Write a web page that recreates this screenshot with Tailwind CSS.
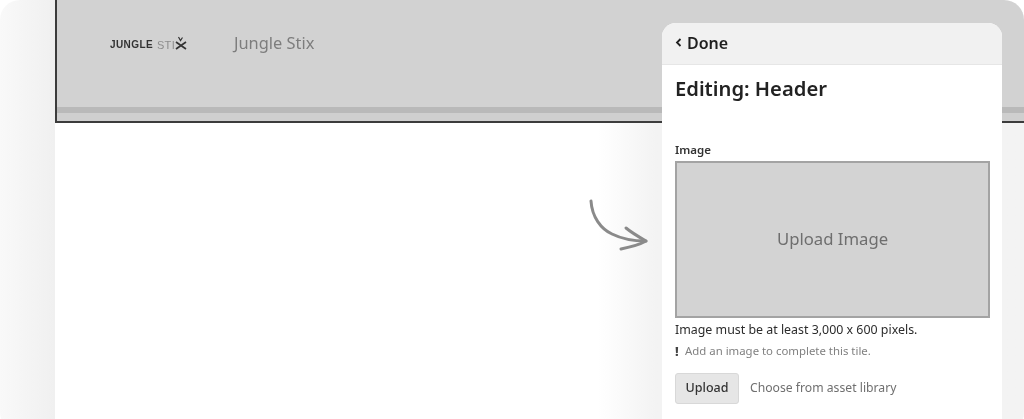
<!DOCTYPE html>
<html><head><meta charset="utf-8"><script src="https://cdn.jsdelivr.net/npm/@tailwindcss/browser@4"></script></head>
<body class="bg-white">
<div class="relative w-[1024px] h-[419px] overflow-hidden bg-white font-['Noto_Sans','Open_Sans',sans-serif] blur-[0.4px]">
  <div class="w-full h-[432px] rounded-[20px] bg-gradient-to-r from-[#f9f9f9] to-[#f0f0f0] to-[5.3%] overflow-hidden pl-[55px] flex">
    <div class="flex-1 flex flex-col bg-white">
      <div class="h-[123px] border-l-2 border-b-2 border-[#3c3c3c] bg-[#d2d2d2] flex flex-col">
        <div class="h-[107px] flex items-center gap-[46px] pl-[53px] pb-[21px]">
          <div class="relative flex items-center w-[78px] leading-none pt-[4px]">
            <span class="font-['Liberation_Sans'] font-bold text-[#333] text-[10px] tracking-[0.4px]">JUNGLE</span>
            <span class="ml-[4px] font-['Liberation_Sans'] text-[#8d8d8d] text-[11px] tracking-[0.3px]">ST</span>
            <span class="text-[#8d8d8d] text-[11px] font-['Liberation_Sans']">I</span>
            <svg class="ml-[-1px] mt-[-4px]" width="14" height="14" viewBox="0 0 14 14" fill="none" stroke="#333" stroke-width="1.7"><path d="M2 6 L12 13 M2 13 L12 6"/><path d="M4.5 1 L6.5 4.5 L8.5 1.5" stroke-width="1.2"/></svg>
          </div>
          <span class="text-[16.4px] leading-none text-[#7d7d7d]">Jungle Stix</span>
        </div>
        <div class="h-[6px] bg-[#b9b9b9]"></div>
        <div class="flex-1 bg-[#cfcfcf]"></div>
      </div>
      <div class="flex-1 bg-gradient-to-r from-white from-[56%] to-[#f3f3f3] to-[62%]"></div>
    </div>
  </div>

  <svg class="absolute left-[585px] top-[195px]" width="65" height="60" viewBox="0 0 65 60" fill="none" stroke="#8a8a8a" stroke-width="3" stroke-linecap="round" stroke-linejoin="round">
    <path d="M6 6 C7 22 16 34 27 39 C37 44 49 46 61 46"/>
    <path d="M41 33 C47 38 54 42 61 46 C54 50 46 52 36 54"/>
  </svg>

  <div class="absolute left-[662px] top-[23px] w-[340px] h-[396px] rounded-t-[14px] bg-white overflow-hidden text-[#1f1f1f]">
    <div class="h-[42px] bg-[#f1f1f1] border-b border-[#e6e6e6] flex items-center pl-[13px] pb-[2px] gap-[5px]">
      <svg width="7" height="9" viewBox="0 0 7 9" fill="none" stroke="#222" stroke-width="1.8"><path d="M5.5 1 L2 4.5 L5.5 8"/></svg>
      <span class="text-[16px] font-semibold leading-none">Done</span>
    </div>
    <div class="px-[13px]">
      <h1 class="mt-[12px] text-[20.2px] leading-[22px] font-semibold text-[#222]">Editing: Header</h1>
      <div class="mt-[44px] text-[11.5px] leading-[14px] font-semibold text-[#333]">Image</div>
      <div class="mt-[4px] w-[315px] h-[157px] bg-[#d3d3d3] border-2 border-[#a3a3a3] flex items-center justify-center pb-[2px] text-[16.7px] text-[#6e6e6e]">Upload Image</div>
      <div class="mt-[3px] text-[12.4px] leading-[17px] text-[#2c2c2c]">Image must be at least 3,000 x 600 pixels.</div>
      <div class="mt-[6px] flex items-center gap-[3px] text-[11.4px] leading-[14px] text-[#808080]"><span class="font-extrabold text-[#444] text-[13px] leading-none w-[7px]">!</span><span>Add an image to complete this tile.</span></div>
      <div class="mt-[15px] flex items-center gap-[11px]">
        <button class="w-[64px] h-[31px] rounded-[3px] bg-[#e6e6e6] border border-[#d8d8d8] text-[12.5px] font-medium text-[#333]">Upload</button>
        <span class="text-[12.2px] text-[#6f6f6f]">Choose from asset library</span>
      </div>
    </div>
  </div>
</div>
</body></html>
